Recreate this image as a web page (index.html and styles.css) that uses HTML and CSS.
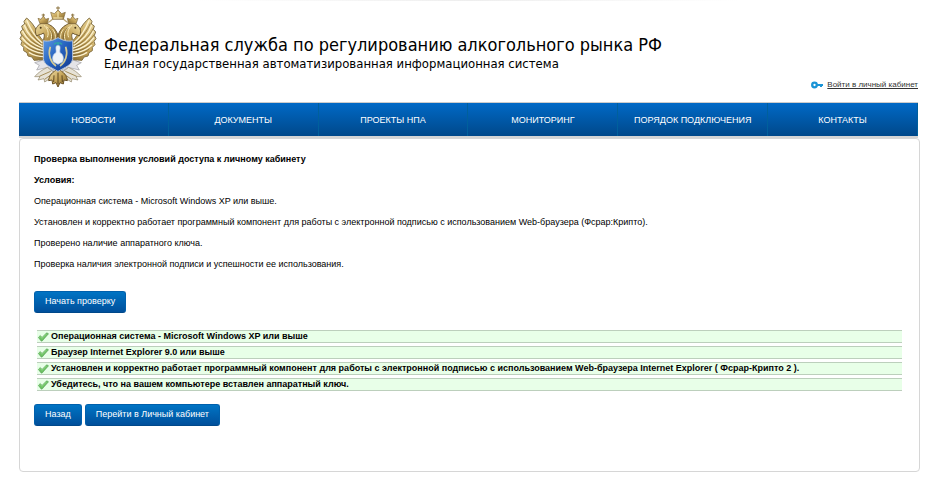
FILE: index.html
```html
<!DOCTYPE html>
<html lang="ru">
<head>
    <meta charset="UTF-8">
    <meta name="viewport" content="width=device-width, initial-scale=1.0">
    <title>Проверка условий доступа</title>
    <link rel="stylesheet" href="styles.css">
</head>
<body>

<svg class="sprite" aria-hidden="true">
    <symbol id="tick" viewBox="0 0 12 12">
        <path d="M1 7 L3 5 L5 7 L10 2 L12 3 L5 11 L4 11 Z" fill="#6cc262" stroke="#559f55" stroke-width="0.7" stroke-linejoin="round"/>
        <path d="M2 7 L3 6 L5 8 L10 3" fill="none" stroke="#9bdc93" stroke-width="0.8"/>
    </symbol>
</svg>

<div class="page">
    <header class="header">
        <svg class="emblem" viewBox="0 0 240 258" role="img" aria-label="Герб">
            <defs>
                <linearGradient id="gold" x1="0" y1="0" x2="1" y2="1">
                    <stop offset="0" stop-color="#f3e3ab"/>
                    <stop offset="0.5" stop-color="#c6a55a"/>
                    <stop offset="1" stop-color="#80652c"/>
                </linearGradient>
                <linearGradient id="blue" x1="0" y1="0" x2="1" y2="1">
                    <stop offset="0" stop-color="#5c9be6"/>
                    <stop offset="0.5" stop-color="#2460bd"/>
                    <stop offset="1" stop-color="#12388c"/>
                </linearGradient>
                <g id="half">
                    <!-- wing -->
                    <path d="M26 42 L18 52 L20 60 L11 66 L14 76 L7 84 L11 94 L6 104 L12 112 L9 122 L17 130 L17 140 L27 146 L30 156 L42 159 L48 169 L62 168 L84 170 L88 118 C74 112 64 98 58 84 C50 66 38 52 26 42 Z" fill="url(#gold)" stroke="#857246" stroke-width="3"/>
                    <g fill="none" stroke="#fbf1cf" stroke-width="4" stroke-linecap="round">
                        <path d="M27 50 C36 72 48 96 72 116"/>
                        <path d="M19 64 C27 86 44 108 72 124"/>
                        <path d="M14 82 C23 102 44 122 74 132"/>
                        <path d="M13 102 C26 120 46 134 76 140"/>
                        <path d="M19 124 C34 138 54 146 78 149"/>
                        <path d="M34 146 C46 154 62 158 80 158"/>
                    </g>
                    <g fill="none" stroke="#7c6230" stroke-width="2">
                        <path d="M23 58 C32 80 48 102 70 120"/>
                        <path d="M15 74 C24 95 44 115 70 128"/>
                        <path d="M12 92 C24 112 46 128 72 136"/>
                        <path d="M16 114 C30 130 50 141 76 145"/>
                        <path d="M26 134 C40 147 58 153 78 154"/>
                    </g>
                    <!-- neck and head -->
                    <path d="M120 112 L80 118 C72 106 84 96 76 87 C70 93 64 90 56 96 C50 84 52 74 58 68 C64 56 82 53 94 62 C108 68 116 82 120 94 Z" fill="url(#gold)" stroke="#6c5730" stroke-width="3"/>
                    <path d="M84 68 C100 76 104 92 98 110 M78 64 C88 72 94 86 88 100 M104 76 C112 86 114 98 110 110" fill="none" stroke="#fbedbd" stroke-width="3"/>
                    <path d="M92 72 C104 84 106 96 102 110" fill="none" stroke="#735a28" stroke-width="2"/>
                    <circle cx="68" cy="71" r="3" fill="#4c3a18"/>
                    <!-- side crown -->
                    <path d="M66 59 L60 43 L69 46 L76 36 L83 46 L92 43 L88 59 Z" fill="url(#gold)" stroke="#7b6436" stroke-width="2"/>
                    <path d="M76 29 V38 M71 33 H81" stroke="#8b733f" stroke-width="3"/>
                    <path d="M90 55 C98 54 100 46 109 42" fill="none" stroke="#bca878" stroke-width="4"/>
                    <!-- ribbon and leg -->
                    <path d="M82 166 L50 176 L64 184 L56 198 L90 190 L106 200 L108 182 Z" fill="#e4e4e8" stroke="#9b9ba1" stroke-width="2"/>
                    <path d="M88 190 C72 198 60 206 50 218 L66 218 L60 228 L78 224 L80 234 L100 221 L112 208 Z" fill="#e6e2d6" stroke="#8f8465" stroke-width="2"/>
                    <path d="M64 217 L98 202 M80 226 L106 207" stroke="#a68f5a" stroke-width="3"/>
                </g>
            </defs>
            <use href="#half"/>
            <use href="#half" transform="translate(240 0) scale(-1 1)"/>
            <!-- tail -->
            <path d="M120 196 C104 202 92 216 92 230 L102 228 L104 240 L114 236 L120 249 L126 236 L136 240 L138 228 L148 230 C148 216 136 202 120 196 Z" fill="url(#gold)" stroke="#6b5226" stroke-width="3"/>
            <path d="M120 206 V240 M108 214 L107 234 M132 214 L133 234" stroke="#5e481f" stroke-width="3"/>
            <!-- main crown -->
            <path d="M104 46 L98 25 L109 29 L120 18 L131 29 L142 25 L136 46 Z" fill="url(#gold)" stroke="#7b6436" stroke-width="2"/>
            <path d="M120 7 V19 M114 12 H126" stroke="#8b733f" stroke-width="3"/>
            <path d="M106 42 H134 M120 24 V40" stroke="#fff2bf" stroke-width="3"/>
            <!-- shield -->
            <path d="M76 110 C92 114 108 108 120 101 C132 108 148 114 164 110 V164 C162 184 140 190 120 202 C100 190 78 184 76 164 Z" fill="url(#blue)" stroke="#b7c3d6" stroke-width="3"/>
            <path d="M97 128 C89 152 98 176 114 186 M143 128 C151 152 142 176 126 186" fill="none" stroke="#d6cc94" stroke-width="5"/>
            <path d="M118 124 C110 128 116 138 114 146 C104 150 101 164 107 174 L120 181 L133 174 C139 164 136 150 126 146 C124 138 130 128 122 124 Z" fill="#edf3f9" stroke="#b9cde6" stroke-width="2"/>
            <path d="M108 121 C114 114 126 114 132 121 M120 114 V124" fill="none" stroke="#30a7a6" stroke-width="4"/>
        </svg>
        <div class="titles">
            <h1>Федеральная служба по регулированию алкогольного рынка РФ</h1>
            <h2>Единая государственная автоматизированная информационная система</h2>
        </div>
        <div class="login">
            <svg class="key" viewBox="0 0 12 8" aria-hidden="true">
                <circle cx="3.5" cy="4" r="2.3" fill="none" stroke="#1a94d6" stroke-width="2.3"/>
                <path d="M6 3 H12 V5 H11 V6 H9 V5 H6 Z" fill="#1a94d6"/>
            </svg>
            <a href="#">Войти в личный кабинет</a>
        </div>
    </header>

    <nav class="menu">
        <a href="#">НОВОСТИ</a>
        <a href="#">ДОКУМЕНТЫ</a>
        <a href="#">ПРОЕКТЫ НПА</a>
        <a href="#">МОНИТОРИНГ</a>
        <a href="#">ПОРЯДОК ПОДКЛЮЧЕНИЯ</a>
        <a href="#">КОНТАКТЫ</a>
    </nav>

    <main class="content">
        <p><b>Проверка выполнения условий доступа к личному кабинету</b></p>
        <p><b>Условия:</b></p>
        <p>Операционная система - Microsoft Windows XP или выше.</p>
        <p>Установлен и корректно работает программный компонент для работы с электронной подписью с использованием Web-браузера (Фсрар:Крипто).</p>
        <p>Проверено наличие аппаратного ключа.</p>
        <p>Проверка наличия электронной подписи и успешности ее использования.</p>

        <button type="button" class="btn">Начать проверку</button>

        <ul class="checks">
            <li><svg class="tick" aria-hidden="true"><use href="#tick"/></svg>Операционная система - Microsoft Windows XP или выше</li>
            <li><svg class="tick" aria-hidden="true"><use href="#tick"/></svg>Браузер Internet Explorer 9.0 или выше</li>
            <li><svg class="tick" aria-hidden="true"><use href="#tick"/></svg>Установлен и корректно работает программный компонент для работы с электронной подписью с использованием Web-браузера Internet Explorer ( Фсрар-Крипто 2 ).</li>
            <li><svg class="tick" aria-hidden="true"><use href="#tick"/></svg>Убедитесь, что на вашем компьютере вставлен аппаратный ключ.</li>
        </ul>

        <div class="buttons">
            <button type="button" class="btn">Назад</button>
            <button type="button" class="btn">Перейти в Личный кабинет</button>
        </div>
    </main>
</div>

</body>
</html>
```

FILE: styles.css
```css
body {
    margin: 0;
    background: #fff;
    color: #000;
    font-family: "Liberation Sans", Arial, sans-serif;
    font-size: 9px;
    line-height: 11px;
}

.sprite {
    display: none;
}

.page {
    padding: 0 21px 16px 19px;
}

.page::before {
    content: "";
    display: block;
    height: 1px;
    margin: 0 20%;
    background: linear-gradient(to right, #fff, #eee, #fff);
}

.header {
    display: flex;
    height: 101px;
}

.emblem {
    flex: none;
    width: 80px;
    height: 86px;
    margin-top: 3px;
    margin-left: -1px;
}

.titles {
    flex: 1;
    padding: 33px 0 0 6px;
    font-family: "DejaVu Sans Condensed", Tahoma, "DejaVu Sans", sans-serif;
    white-space: nowrap;
}

.titles h1,
.titles h2 {
    margin: 0;
    font-weight: normal;
}

.titles h1 {
    font-size: 18px;
    line-height: 22px;
}

.titles h2 {
    font-size: 13px;
    line-height: 16px;
}

.login {
    display: flex;
    align-items: center;
    align-self: flex-end;
    gap: 4px;
    padding: 0 2px 12px 0;
    font-size: 8px;
    white-space: nowrap;
}

.login a {
    color: #333;
}

.key {
    width: 12px;
    height: 8px;
}

.menu {
    display: grid;
    grid-template-columns: repeat(6, 1fr);
    margin-right: 2px;
    border-top: 1px solid #ccc;
    border-bottom: 2px solid #d4d4d4;
}

.menu a {
    padding: 11px 0 10px;
    border-right: 1px solid #00609c;
    background: linear-gradient(#0069c6, #00488a);
    color: #fff;
    line-height: 12px;
    text-align: center;
    text-decoration: none;
}

.content {
    box-sizing: border-box;
    min-height: 334px;
    padding: 15px 17px 45px 14px;
    border: 1px solid #d6d6d6;
    border-radius: 4px;
}

.content p {
    margin: 0 0 10px;
}

.btn {
    height: 22px;
    padding: 0 10px 2px;
    border: 1px solid #0060ac;
    border-bottom-color: #00488a;
    border-radius: 3px;
    background: linear-gradient(#0074c4, #004f9b);
    color: #fff;
    font: 9px "Liberation Sans", Arial, sans-serif;
    cursor: pointer;
}

.content > .btn {
    margin-top: 11px;
}

.checks {
    display: grid;
    gap: 3px;
    margin: 17px 0 13px 3px;
    padding: 0;
    list-style: none;
    font-weight: bold;
}

.checks li {
    display: flex;
    align-items: center;
    gap: 2px;
    border-top: 1px solid #bccfbc;
    border-bottom: 1px solid #bccfbc;
    background: #e8ffe8;
}

.tick {
    flex: none;
    width: 12px;
    height: 11px;
}

.buttons {
    display: flex;
    gap: 3px;
}
```
